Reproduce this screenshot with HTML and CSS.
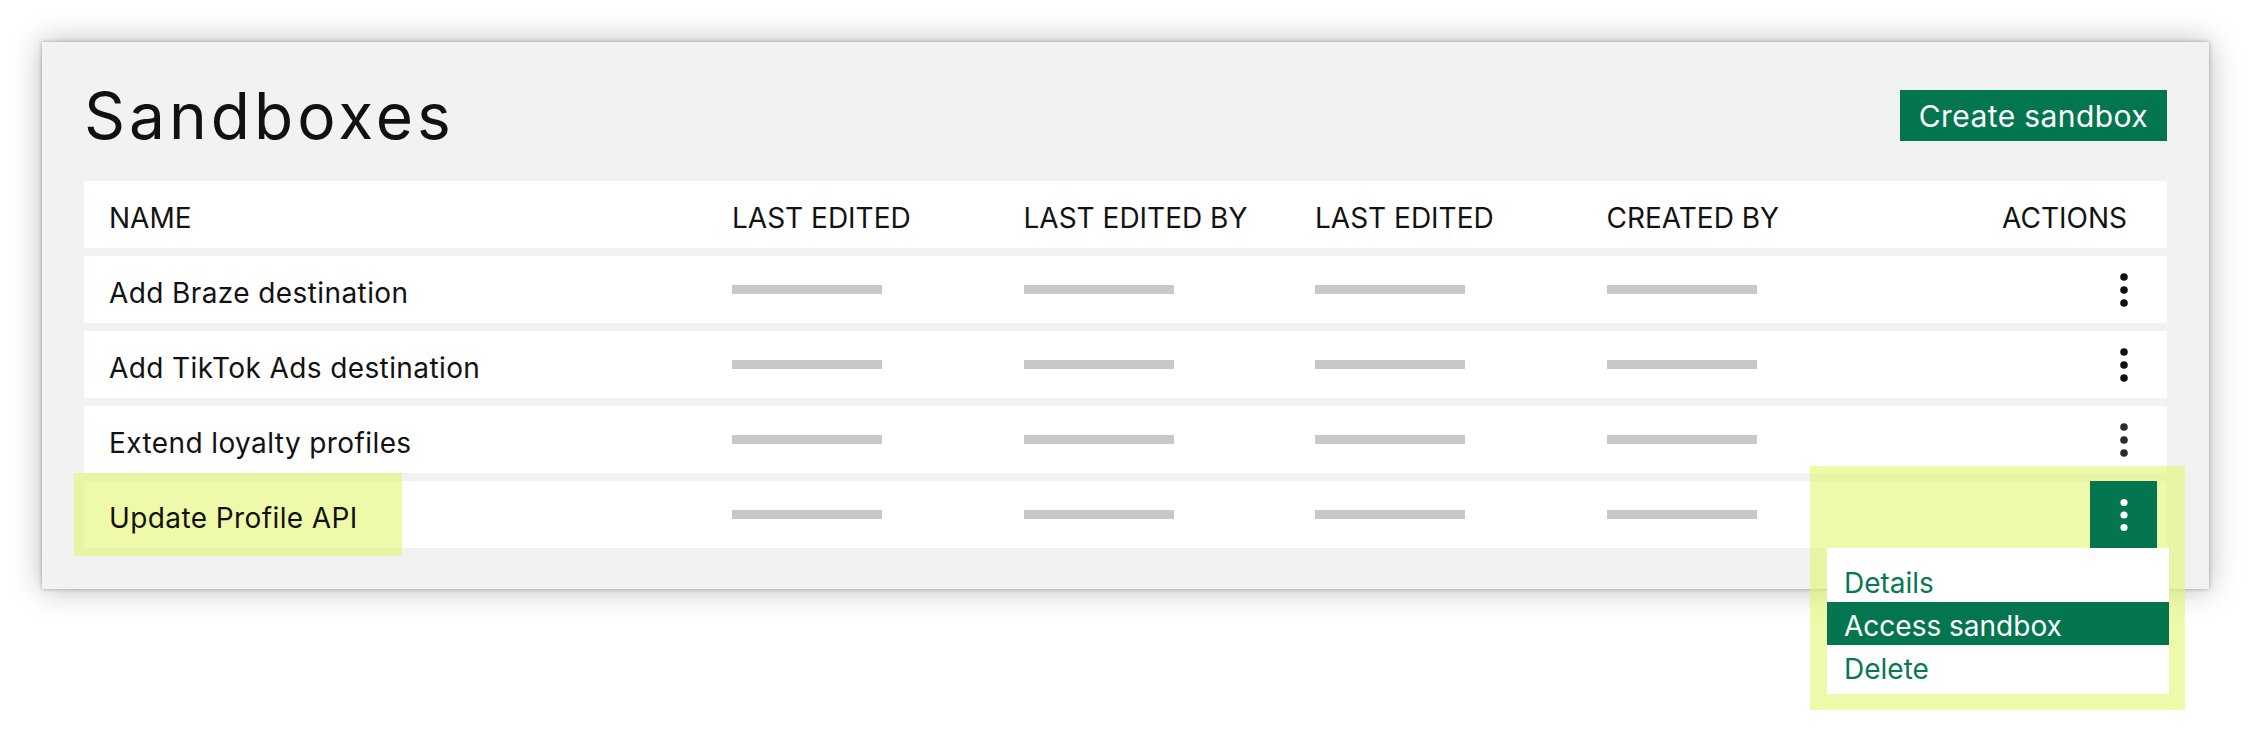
FILE: index.html
```html
<!DOCTYPE html>
<html lang="en">
<head>
<meta charset="utf-8">
<title>Sandboxes</title>
<link rel="stylesheet" href="styles.css">
</head>
<body>
<div class="page">
  <section class="panel">
    <header class="panel-head">
      <h1 class="title">Sandboxes</h1>
      <button class="btn-primary" type="button">Create sandbox</button>
    </header>
    <div class="table">
      <div class="row head">
        <div class="cell text">NAME</div>
        <div class="cell text">LAST EDITED</div>
        <div class="cell text">LAST EDITED BY</div>
        <div class="cell text">LAST EDITED</div>
        <div class="cell text">CREATED BY</div>
        <div class="cell text actions-label">ACTIONS</div>
      </div>
      <div class="row">
        <div class="cell text">Add Braze destination</div>
        <div class="cell"><span class="bar"></span></div>
        <div class="cell"><span class="bar"></span></div>
        <div class="cell"><span class="bar"></span></div>
        <div class="cell"><span class="bar"></span></div>
        <div class="cell actions">
          <span class="kebab"><svg width="8" height="34" viewBox="0 0 8 34"><circle cx="4" cy="4" r="3.8"/><circle cx="4" cy="17" r="3.8"/><circle cx="4" cy="30" r="3.8"/></svg></span>
        </div>
      </div>
      <div class="row">
        <div class="cell text">Add TikTok Ads destination</div>
        <div class="cell"><span class="bar"></span></div>
        <div class="cell"><span class="bar"></span></div>
        <div class="cell"><span class="bar"></span></div>
        <div class="cell"><span class="bar"></span></div>
        <div class="cell actions">
          <span class="kebab"><svg width="8" height="34" viewBox="0 0 8 34"><circle cx="4" cy="4" r="3.8"/><circle cx="4" cy="17" r="3.8"/><circle cx="4" cy="30" r="3.8"/></svg></span>
        </div>
      </div>
      <div class="row">
        <div class="cell text">Extend loyalty profiles</div>
        <div class="cell"><span class="bar"></span></div>
        <div class="cell"><span class="bar"></span></div>
        <div class="cell"><span class="bar"></span></div>
        <div class="cell"><span class="bar"></span></div>
        <div class="cell actions">
          <span class="kebab soft"><svg width="8" height="34" viewBox="0 0 8 34"><circle cx="4" cy="4" r="3.8"/><circle cx="4" cy="17" r="3.8"/><circle cx="4" cy="30" r="3.8"/></svg></span>
        </div>
      </div>
      <div class="row">
        <div class="cell text">
          <span class="hl hl-name"></span>
          <span class="label">Update Profile API</span>
        </div>
        <div class="cell"><span class="bar"></span></div>
        <div class="cell"><span class="bar"></span></div>
        <div class="cell"><span class="bar"></span></div>
        <div class="cell"><span class="bar"></span></div>
        <div class="cell actions">
          <span class="hl hl-menu"></span>
          <span class="kebab active"><svg width="8" height="34" viewBox="0 0 8 34"><circle cx="4" cy="4.5" r="3.6"/><circle cx="4" cy="17" r="3.6"/><circle cx="4" cy="29.5" r="3.6"/></svg></span>
          <ul class="menu">
            <li class="menu-item">Details</li>
            <li class="menu-item selected">Access sandbox</li>
            <li class="menu-item">Delete</li>
          </ul>
        </div>
      </div>
    </div>
  </section>
</div>
</body>
</html>
```

FILE: styles.css
```css
* {
  box-sizing: border-box;
  margin: 0;
  padding: 0;
}

html,
body {
  background: #ffffff;
}

body {
  min-height: 753px;
  font-family: Inter, "Open Sans", "Liberation Sans", sans-serif;
  color: #121212;
}

.page {
  min-height: 753px;
  padding: 42px;
}

.panel {
  background: #f1f3f2;
  padding: 42px 42px 41px;
  box-shadow: 0 0 4px rgba(0, 0, 0, 0.32), 0 0 30px rgba(0, 0, 0, 0.27);
}

.panel-head {
  display: flex;
  align-items: center;
  justify-content: space-between;
  height: 63px;
  margin-bottom: 34px;
}

.title {
  font-size: 64px;
  font-weight: 400;
  line-height: 63px;
  letter-spacing: 4px;
  color: #111;
}

.btn-primary {
  background: #037650;
  color: #ffffff;
  border: 0;
  height: 51px;
  padding: 0 19px;
  font-family: inherit;
  font-size: 30px;
  font-weight: 400;
  letter-spacing: 0.4px;
}

.table {
  display: flex;
  flex-direction: column;
  gap: 8px;
}

.row {
  display: grid;
  grid-template-columns: 1fr repeat(4, 291.5px) 259px;
  height: 67px;
  background: #ffffff;
  padding: 0 10px 0 25px;
}

.cell {
  display: flex;
  align-items: center;
  position: relative;
  min-width: 0;
}

.text {
  font-size: 28px;
  letter-spacing: 0.4px;
  padding-top: 6px;
  white-space: nowrap;
}

.head .text {
  letter-spacing: 0;
}

.actions-label {
  justify-content: flex-end;
  padding-right: 30px;
}

.bar {
  display: block;
  width: 150px;
  height: 9px;
  background: #c8c8c8;
}

.actions {
  justify-content: flex-end;
}

.kebab {
  width: 67px;
  height: 67px;
  display: flex;
  align-items: center;
  justify-content: center;
  position: relative;
  z-index: 2;
  fill: #111;
}

.kebab.soft {
  fill: #2a2b31;
}

.kebab.active {
  background: #037650;
  fill: #ffffff;
}

.label {
  position: relative;
  z-index: 2;
}

.hl {
  position: absolute;
  background: rgba(226, 246, 112, 0.6);
  z-index: 1;
}

.hl-name {
  left: -35px;
  top: -8px;
  bottom: -8px;
  width: 328px;
}

.hl-menu {
  right: -28px;
  top: -15px;
  bottom: -162px;
  width: 375px;
}

.menu {
  list-style: none;
  position: absolute;
  top: 100%;
  right: -12px;
  width: 342px;
  background: #ffffff;
  padding: 11px 0 6px;
  z-index: 3;
}

.menu-item {
  height: 43px;
  line-height: 43px;
  padding: 3px 0 0 17px;
  font-size: 28px;
  letter-spacing: 0;
  color: #087852;
  white-space: nowrap;
  overflow: visible;
}

.menu-item.selected {
  background: #037650;
  color: #ffffff;
}
```
